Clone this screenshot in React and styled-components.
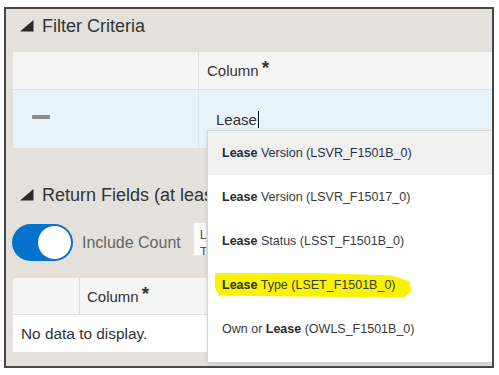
import React from "react";
import styled, { createGlobalStyle } from "styled-components";

const Global = createGlobalStyle`
  html, body { margin: 0; padding: 0; background: #ffffff; }
  body { font-family: "Liberation Sans", Arial, sans-serif; }
  * { box-sizing: border-box; }
`;

const Page = styled.div`
  padding: 7px 0 0 4px;
  width: 499px;
  height: 375px;
  overflow: hidden;
`;

const Frame = styled.div`
  position: relative;
  width: 490px;
  height: 361px;
  border: 2px solid #474747;
  background: #e4e1dc;
  padding: 0 0 0 7px;
  overflow: hidden;
`;

const SectionTitle = styled.div`
  display: flex;
  align-items: center;
  gap: 8px;
  height: 22px;
  width: ${(p) => (p.$w ? `${p.$w}px` : "auto")};
  overflow: hidden;
  margin: ${(p) => p.$mt}px 0 0 7px;
  font-size: 18px;
  line-height: 22px;
  color: #333;
  white-space: nowrap;
`;

const TitleText = styled.span`
  flex: none;
`;

const Tri = () => (
  <svg width="14" height="12" viewBox="0 0 14 12" style={{ flex: "none" }}>
    <polygon points="13.5,0 13.5,11.5 0,11.5" fill="#2b2b2b" />
  </svg>
);

const Table = styled.div`
  margin-top: ${(p) => p.$mt}px;
  display: grid;
  grid-template-columns: ${(p) => p.$cols};
`;

const HeadCell = styled.div`
  height: ${(p) => p.$h}px;
  background: #f5f5f5;
  border-bottom: 1px solid #e2e2e2;
  border-left: ${(p) => (p.$first ? "none" : "1px solid #e0e0e0")};
  display: flex;
  align-items: center;
  padding-left: ${(p) => p.$pl || 0}px;
  font-size: 15px;
  color: #333;
`;

const Req = styled.span`
  font-size: 19px;
  font-weight: bold;
  margin-left: 3px;
  align-self: flex-start;
  margin-top: 6px;
  line-height: 19px;
`;

const RowCell = styled.div`
  height: 58px;
  background: #e8f2f9;
  border-left: ${(p) => (p.$first ? "none" : "1px solid #d9e4ec")};
  display: flex;
  align-items: center;
  padding-left: ${(p) => p.$pl}px;
  font-size: 15px;
  color: #333;
`;

const Minus = styled.span`
  display: block;
  width: 18px;
  height: 4px;
  border-radius: 1px;
  background: #8c8c8c;
  margin-bottom: 5px;
`;

const Caret = styled.span`
  display: inline-block;
  width: 1px;
  height: 17px;
  background: #111;
  margin-left: 1px;
`;

const ToggleRow = styled.div`
  display: flex;
  align-items: center;
  margin: 18px 0 0 -1px;
  height: 37px;
`;

const Toggle = styled.div`
  width: 61px;
  height: 37px;
  border-radius: 19px;
  background: #0572ce;
  display: flex;
  align-items: center;
  justify-content: flex-end;
  padding: 2px;
`;

const Knob = styled.div`
  width: 33px;
  height: 33px;
  border-radius: 50%;
  background: #ffffff;
`;

const ToggleLabel = styled.span`
  margin-left: 9px;
  font-size: 16px;
  color: #666;
`;

const MiniInput = styled.div`
  margin-left: 12px;
  align-self: flex-start;
  margin-top: -2px;
  width: 13px;
  height: 34px;
  overflow: hidden;
  background: #fafafa;
  border: 1px solid #e6e6e6;
  border-right: none;
  padding: 3px 0 0 6px;
  font-size: 13px;
  line-height: 17px;
  color: #555;
`;

const EmptyCell = styled.div`
  grid-column: 1 / -1;
  height: 37px;
  background: #ffffff;
  display: flex;
  align-items: center;
  padding-left: 8px;
  font-size: 15.4px;
  color: #333;
`;

const Dropdown = styled.div`
  position: absolute;
  left: 201px;
  top: 121px;
  right: 0;
  bottom: 3px;
  background: #ffffff;
  border: 1px solid #d6d6d6;
  border-right: none;
  box-shadow: 0 1px 4px rgba(0, 0, 0, 0.12);
  display: flex;
  flex-direction: column;
`;

const Item = styled.div`
  height: 44px;
  flex: none;
  display: flex;
  align-items: center;
  padding-left: 14px;
  background: ${(p) => (p.$active ? "#f0f0f0" : "transparent")};
  font-size: 12.5px;
  color: ${(p) => (p.$active ? "#24324d" : "#3a3a3a")};
  white-space: nowrap;
  b { font-weight: bold; color: ${(p) => (p.$active ? "#1d2a44" : "#2a2a2a")}; }
`;

const Label = styled.span`
  white-space: pre;
`;

const Marker = styled.span`
  display: inline-block;
  margin-left: -7px;
  padding: 5px 16px 6px 7px;
  background: #f9f200;
  white-space: pre;
  clip-path: polygon(0 2%, 45% 0, 90% 12%, 99% 35%, 100% 75%, 96% 100%, 40% 96%, 2% 92%, 0 60%);
`;

const items = [
  { b: "Lease", t: " Version (LSVR_F1501B_0)", active: true },
  { b: "Lease", t: " Version (LSVR_F15017_0)" },
  { b: "Lease", t: " Status (LSST_F1501B_0)" },
  { b: "Lease", t: " Type (LSET_F1501B_0)", mark: true },
  { pre: "Own or ", b: "Lease", t: " (OWLS_F1501B_0)" },
];

export default function App() {
  return (
    <>
      <Global />
      <Page>
        <Frame>
          <SectionTitle $mt={6}>
            <Tri />
            <TitleText>Filter Criteria</TitleText>
          </SectionTitle>
          <Table $mt={15} $cols="185px 1fr">
            <HeadCell $h={38} $first />
            <HeadCell $h={38} $pl={8}>
              Column<Req>*</Req>
            </HeadCell>
            <RowCell $first $pl={19}>
              <Minus />
            </RowCell>
            <RowCell $pl={17}>
              Lease
              <Caret />
            </RowCell>
          </Table>

          <SectionTitle $mt={36} $w={187}>
            <Tri />
            <TitleText>Return Fields (at least one)</TitleText>
          </SectionTitle>
          <ToggleRow>
            <Toggle>
              <Knob />
            </Toggle>
            <ToggleLabel>Include Count</ToggleLabel>
            <MiniInput>
              L<br />T
            </MiniInput>
          </ToggleRow>

          <Table $mt={17} $cols="66px 1fr">
            <HeadCell $h={37} $first />
            <HeadCell $h={37} $pl={7}>
              Column<Req>*</Req>
            </HeadCell>
            <EmptyCell>No data to display.</EmptyCell>
          </Table>

          <Dropdown>
            {items.map((it, i) => {
              const content = (
                <>
                  {it.pre}
                  <b>{it.b}</b>
                  {it.t}
                </>
              );
              return (
                <Item key={i} $active={it.active}>
                  {it.mark ? <Marker>{content}</Marker> : <Label>{content}</Label>}
                </Item>
              );
            })}
          </Dropdown>
        </Frame>
      </Page>
    </>
  );
}
